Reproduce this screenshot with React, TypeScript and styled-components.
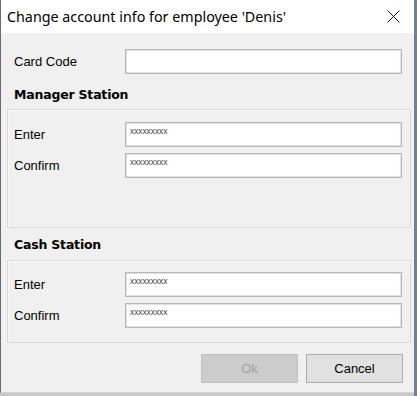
import React from 'react';
import styled, { createGlobalStyle } from 'styled-components';

const GlobalStyle = createGlobalStyle`
  html, body {
    margin: 0;
    padding: 0;
    background: #c3c7cd;
    overflow: hidden;
  }
  * {
    box-sizing: border-box;
  }
`;

const Desktop = styled.div`
  width: 417px;
  height: 396px;
  background: linear-gradient(90deg, #c8c8c8 0, #c8c8c8 414px, #6f819a 414px);
`;

const Window = styled.div`
  width: 414px;
  height: 393px;
  display: flex;
  flex-direction: column;
  background: #f0f0f0;
  border-left: 1px solid #6a6a6a;
  border-bottom: 1px solid #d4d4d4;
  font-family: 'Liberation Sans', Arial, sans-serif;
  font-size: 13px;
  color: #000;
`;

const TitleBar = styled.div`
  height: 33px;
  flex: none;
  display: flex;
  align-items: center;
  justify-content: space-between;
  padding-left: 6px;
  background: #fff;
`;

const Title = styled.span`
  font-family: 'Noto Sans', 'Open Sans', sans-serif;
  font-size: 14.3px;
  color: #000;
  margin-top: -1px;
`;

const CloseButton = styled.button`
  width: 46px;
  height: 33px;
  border: none;
  background: transparent;
  display: flex;
  align-items: center;
  justify-content: center;
  padding: 0 0 0 4px;
`;

const Body = styled.div`
  flex: 1;
  display: flex;
  flex-direction: column;
  padding: 16px 4px 0 6px;
`;

const Row = styled.div<{ $indent?: number }>`
  display: flex;
  align-items: center;
  height: 25px;
  padding-left: ${(p) => p.$indent ?? 0}px;
`;

const Label = styled.span<{ $width: number }>`
  width: ${(p) => p.$width}px;
  flex: none;
`;

const TextBox = styled.div`
  width: 277px;
  height: 25px;
  background: #fff;
  border: 1px solid #b7b7b7;
  box-shadow: inset 0 0 0 1px #e2e2e2;
  padding: 3px 0 0 4px;
  font-size: 8.5px;
  letter-spacing: -0.1px;
  color: #444;
  line-height: 10px;
`;

const Heading = styled.div<{ $top: number; $bottom: number }>`
  font-family: 'DejaVu Sans', Verdana, sans-serif;
  font-weight: bold;
  font-size: 12.5px;
  line-height: 14px;
  padding: ${(p) => p.$top}px 0 ${(p) => p.$bottom}px 7px;
  letter-spacing: -0.2px;
`;

const GroupBox = styled.div<{ $height: number; $top: number }>`
  height: ${(p) => p.$height}px;
  width: 404px;
  border: 1px solid #dadada;
  box-shadow: inset 1px 1px 0 #fafafa;
  display: flex;
  flex-direction: column;
  gap: 6px;
  padding: ${(p) => p.$top}px 0 0 6px;
`;

const ButtonBar = styled.div`
  display: flex;
  justify-content: flex-end;
  gap: 8px;
  padding: 11px 7px 0 0;
`;

const DialogButton = styled.button<{ $disabled?: boolean }>`
  width: 97px;
  height: 29px;
  font-family: 'Liberation Sans', Arial, sans-serif;
  font-size: 13px;
  background: ${(p) => (p.$disabled ? '#cccccc' : '#e1e1e1')};
  border: 1px solid ${(p) => (p.$disabled ? '#bfbfbf' : '#adadad')};
  color: ${(p) => (p.$disabled ? '#a3a3a3' : '#000')};
  padding: 0;
`;

const mask = 'xxxxxxxxx';

const Field = ({ label, value }: { label: string; value?: string }) => (
  <Row>
    <Label $width={111}>{label}</Label>
    <TextBox>{value}</TextBox>
  </Row>
);

const App = (): JSX.Element => (
  <Desktop>
    <GlobalStyle />
    <Window>
      <TitleBar>
        <Title>Change account info for employee 'Denis'</Title>
        <CloseButton aria-label="Close">
          <svg width="13" height="13" viewBox="0 0 13 13">
            <path d="M0.5 0.5 L12.5 12.5 M12.5 0.5 L0.5 12.5" stroke="#111" strokeWidth="1" fill="none" />
          </svg>
        </CloseButton>
      </TitleBar>
      <Body>
        <Row $indent={7}>
          <Label $width={111}>Card Code</Label>
          <TextBox />
        </Row>
        <Heading $top={14} $bottom={7}>Manager Station</Heading>
        <GroupBox $height={119} $top={12}>
          <Field label="Enter" value={mask} />
          <Field label="Confirm" value={mask} />
        </GroupBox>
        <Heading $top={10} $bottom={8}>Cash Station</Heading>
        <GroupBox $height={83} $top={11}>
          <Field label="Enter" value={mask} />
          <Field label="Confirm" value={mask} />
        </GroupBox>
        <ButtonBar>
          <DialogButton $disabled disabled>
            Ok
          </DialogButton>
          <DialogButton>Cancel</DialogButton>
        </ButtonBar>
      </Body>
    </Window>
  </Desktop>
);

export default App;
